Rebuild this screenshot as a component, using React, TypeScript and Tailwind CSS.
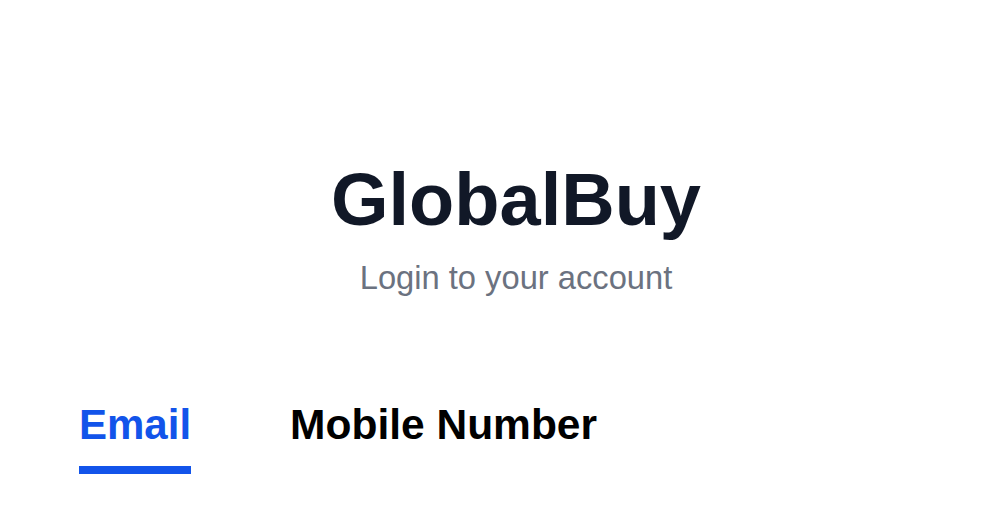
export default function App() {
  return (
    <div className="min-h-screen bg-white font-['Liberation_Sans',Arial,sans-serif]">
      <header className="flex flex-col items-center pt-[163px] pl-[44px]">
        <h1 className="text-[74px] leading-none font-bold text-[#111827]">GlobalBuy</h1>
        <p className="mt-[25px] text-[32.7px] leading-none text-[#6b7280]">Login to your account</p>
      </header>

      <nav className="mt-[109px] flex items-start gap-[99px] pl-[79px]">
        <button className="flex flex-col">
          <span className="text-[42px] leading-none font-bold text-[#1254ea]">Email</span>
          <span className="mt-[20px] h-[8px] w-full bg-[#1254ea]" />
        </button>
        <button className="flex flex-col">
          <span className="text-[42.5px] leading-none font-bold text-black">Mobile Number</span>
        </button>
      </nav>
    </div>
  );
}
